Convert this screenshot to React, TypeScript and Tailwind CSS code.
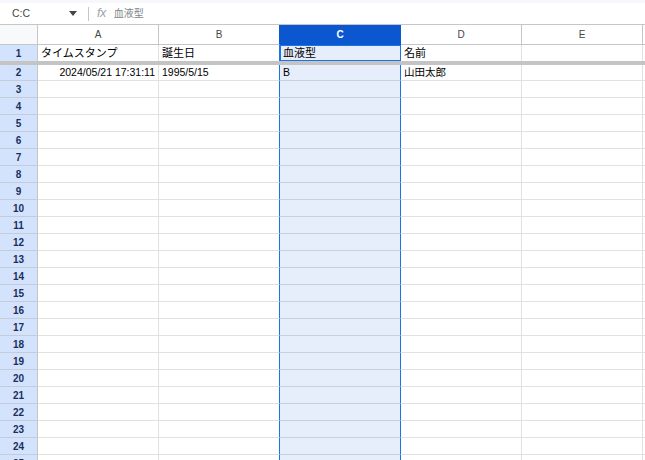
import React from "react";

const font = { fontFamily: '"Liberation Sans", Arial, "Noto Sans CJK JP", sans-serif' };

const cols = ["A", "B", "C", "D", "E"];

const data: Record<number, string[]> = {
    1: ["タイムスタンプ", "誕生日", "血液型", "名前", ""],
    2: ["2024/05/21 17:31:11", "1995/5/15", "B", "山田太郎", ""],
};

const rowNums = Array.from({ length: 24 }, (_, i) => i + 2);

const Cell: React.FC<{ col: number; text?: string; right?: boolean; h: string }> = ({ col, text, right, h }) => {
    // B's right edge and C's right edge are the blue selection borders
    const border =
        col === 1 || col === 2 ? "border-r-[#1a73e8]" : "border-r-[#e1e1e1]";
    const bg = col === 2 ? "bg-[#e6eefc] border-b-[#c7d0de]" : "bg-white border-b-[#e1e1e1]";
    return (
        <div
            className={`${h} w-[121px] shrink-0 border-r border-b ${border} ${bg} flex items-center overflow-hidden whitespace-nowrap px-[3px] text-[10.5px] text-black ${right ? "justify-end" : ""}`}
        >
            {text}
        </div>
    );
};

const RowHead: React.FC<{ n: number; h: string }> = ({ n, h }) => (
    <div
        className={`${h} w-[38px] shrink-0 border-r border-b border-r-[#c4c7c5] border-b-[#c6ccd6] bg-[#d3e3fd] flex items-center justify-center text-[10px] font-bold text-[#1b2f5a]`}
    >
        {n}
    </div>
);

const App: React.FC = () => {
    return (
        <div className="h-[460px] w-[645px] overflow-hidden bg-white" style={font}>
            {/* name box + formula bar */}
            <div className="flex h-[25px] items-center border-t-[3px] border-b border-t-[#f6f8fc] border-b-[#c4c7c5] bg-white">
                <span className="ml-[12px] w-[54px] text-[10.5px] text-[#444746]">C:C</span>
                <svg width="8" height="5" viewBox="0 0 8 5" className="ml-[3px]">
                    <path d="M0 0h8L4 5z" fill="#444746" />
                </svg>
                <div className="ml-[11px] h-[14px] w-px bg-[#c4c7c5]" />
                <span className="ml-[8px] text-[12.5px] italic tracking-[-0.5px] text-[#a0a4a8]">
                    fx
                </span>
                <span className="ml-[8px] text-[10px] text-[#80868b]">血液型</span>
            </div>

            {/* column headers */}
            <div className="flex">
                <div className="h-[20px] w-[38px] shrink-0 border-r border-b border-[#c4c7c5] bg-[#f8f9fa]" />
                {cols.map((c, i) => (
                    <div
                        key={c}
                        className={`flex h-[20px] w-[121px] shrink-0 items-center justify-center border-r border-b text-[10px] ${
                            i === 2
                                ? "border-[#0b57d0] bg-[#0b57d0] font-bold text-white"
                                : i === 1
                                ? "border-r-[#0b57d0] border-b-[#c4c7c5] bg-white text-[#444746]"
                                : "border-[#c4c7c5] bg-white text-[#444746]"
                        }`}
                    >
                        {c}
                    </div>
                ))}
                <div className="h-[20px] flex-1 border-b border-[#c4c7c5] bg-white" />
            </div>

            {/* row 1 (frozen) */}
            <div className="flex">
                <div className="flex h-[16px] w-[38px] shrink-0 items-center justify-center border-r border-[#c4c7c5] bg-[#d3e3fd] text-[10px] font-bold text-[#1b2f5a]">
                    1
                </div>
                {data[1].map((t, i) => (
                    <div
                        key={i}
                        className={`flex h-[16px] w-[121px] shrink-0 items-center overflow-hidden whitespace-nowrap border-r px-[3px] text-[11px] text-black ${
                            i === 2
                                ? "border-[#1a73e8] bg-[#e6eefc] shadow-[inset_1px_0_0_#1a73e8,inset_0_1px_0_#1a73e8,inset_0_-1px_0_#1a73e8]"
                                : i === 1
                                ? "border-[#1a73e8] bg-white"
                                : "border-[#e1e1e1] bg-white"
                        }`}
                    >
                        {t}
                    </div>
                ))}
                <div className="h-[16px] flex-1 bg-white" />
            </div>

            {/* freeze bar */}
            <div className="h-[4px] bg-[#c4c4c4]" />

            {/* body rows */}
            {rowNums.map((n) => {
                const h = n === 2 ? "h-[16px]" : "h-[17px]";
                return (
                    <div className="flex" key={n}>
                        <RowHead n={n} h={h} />
                        {cols.map((_, i) => (
                            <Cell key={i} col={i} h={h} text={data[n]?.[i]} right={n === 2 && i === 0} />
                        ))}
                        <div className={`${h} flex-1 border-b border-[#e1e1e1] bg-white`} />
                    </div>
                );
            })}
        </div>
    );
};

export default App;
